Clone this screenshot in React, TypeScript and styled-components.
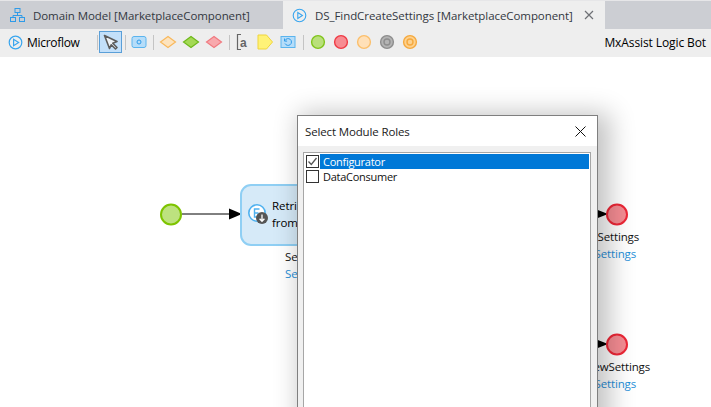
import React from "react";
import styled, { createGlobalStyle } from "styled-components";

const Global = createGlobalStyle`
  html, body { margin: 0; padding: 0; background: #fff; overflow: hidden; }
  #root { width: 711px; height: 407px; }
  * { box-sizing: border-box; }
`;

const Page = styled.div`
  width: 711px; height: 407px; display: flex; flex-direction: column; overflow: hidden;
  font-family: "Open Sans", "Noto Sans", sans-serif; font-size: 11.5px; letter-spacing: -0.07px; color: #000;
`;
const TabBar = styled.div`
  height: 29px; flex: none; display: flex; background: #ccced3; border-top: 1px solid #e6e6e8;
`;
const Tab = styled.div<{ $active?: boolean; $w: number }>`
  width: ${(p) => p.$w}px; display: flex; align-items: center; padding-left: ${(p) => (p.$active ? 9 : 10)}px; gap: 8px;
  background: ${(p) => (p.$active ? "#eeeeee" : "transparent")}; color: #33383f; white-space: nowrap;
`;
const TabClose = styled.svg`
  margin-left: 3px; flex: none;
`;
const Toolbar = styled.div`
  height: 28px; flex: none; background: #eeeeee; display: flex; align-items: center; padding: 0 5px 2px 8px;
`;
const ToolLabel = styled.span`
  font-size: 12px; letter-spacing: -0.3px; margin-left: 4px; width: 62px;
`;
const Sep = styled.i<{ $ml: number; $mr: number }>`
  width: 1px; height: 15px; background: #c4c4c4; flex: none; margin: 0 ${(p) => p.$mr}px 0 ${(p) => p.$ml}px;
`;
const PointerButton = styled.div`
  width: 23px; height: 22px; flex: none; background: #c3e0fa; border: 1px solid #5a9fd8; display: flex; align-items: center; justify-content: center; margin-right: 3px;
`;
const ToolIcon = styled.svg<{ $mr?: number }>`
  flex: none; width: 20px; height: 20px; margin-right: ${(p) => p.$mr ?? 3}px; display: block;
`;
const Bot = styled.span`
  margin-left: auto; font-size: 12px; letter-spacing: -0.1px;
`;
const Canvas = styled.div`
  position: relative; flex: 1; background: #fff;
`;
const Flow = styled.svg`
  position: absolute; left: 0; top: 0;
`;
const Activity = styled.div`
  position: absolute; left: 240px; top: 127px; width: 90px; height: 62px; background: #d6eaf8; border: 2px solid #8fcff4; border-radius: 11px;
  padding: 11px 0 0 30px; line-height: 17px; white-space: nowrap;
`;
const NodeIcon = styled.svg`
  position: absolute; left: 3px; top: 17px;
`;
const Caption = styled.div<{ $x: number; $y: number; $link?: boolean }>`
  position: absolute; top: ${(p) => p.$y - 57 - 8}px; right: ${(p) => 711 - p.$x}px; line-height: 16px; white-space: nowrap; letter-spacing: -0.15px;
  color: ${(p) => (p.$link ? "#1f8fd8" : "#111")};
`;
const LeftCaption = styled(Caption)`
  right: auto; left: ${(p) => p.$x}px;
`;
const Dialog = styled.div`
  position: absolute; left: 297px; top: 58px; width: 301px; height: 360px; background: #f0f0f0; border: 1px solid #7f7f7f;
  box-shadow: 7px 3px 24px 5px rgba(0,0,0,.24); display: flex; flex-direction: column;
`;
const DialogHead = styled.div`
  height: 30px; flex: none; background: #fff; display: flex; align-items: center; justify-content: space-between; padding: 0 11px 0 7px; color: #1a1a1a; letter-spacing: -0.14px;
`;
const ListBox = styled.div`
  margin: 6px 6px 0 5px; flex: 1; background: #fff; border: 1px solid #a6a6a6; padding: 1px 1px 0 1px;
`;
const Row = styled.div`
  display: flex; align-items: center; height: 15px; gap: 1px; padding-left: 1px;
`;
const Box = styled.span`
  width: 13px; height: 13px; flex: none; border: 1px solid #333; background: #fff; display: flex; align-items: center; justify-content: center;
`;
const RowText = styled.span<{ $sel?: boolean }>`
  flex: 1; height: 15px; line-height: 15px; padding-left: 3px; font-size: 11px; letter-spacing: -0.27px;
  background: ${(p) => (p.$sel ? "#0078d7" : "transparent")}; color: ${(p) => (p.$sel ? "#fff" : "#111")};
`;

const Diamond = ({ f, s }: { f: string; s: string }) => (
  <ToolIcon viewBox="0 0 20 20"><path d="M10 4.5 17.500 10 10 15.5 2.500 10Z" fill={f} stroke={s} strokeWidth="1.2" /></ToolIcon>
);
const Dot = ({ f, s, inner }: { f: string; s: string; inner?: boolean }) => (
  <ToolIcon viewBox="0 0 20 20">
    <circle cx="10" cy="10" r="6.4" fill={f} stroke={s} strokeWidth="1.4" />
    {inner && <circle cx="10" cy="10" r="3" fill="none" stroke={s} strokeWidth="1.4" />}
  </ToolIcon>
);

export default function App() {
  return (
    <Page>
      <Global />
      <TabBar>
        <Tab $w={283}>
          <svg width="15" height="16" viewBox="0 0 15 16" fill="none" stroke="#2f9be8" strokeWidth="1">
            <rect x="5" y="1.5" width="5" height="4" /><rect x=".5" y="10.5" width="5" height="4" /><rect x="9.5" y="10.5" width="5" height="4" />
            <path d="M7.5 5.5v3M3 10.5v-2h9v2" />
          </svg>
          Domain Model [MarketplaceComponent]
        </Tab>
        <Tab $active $w={322}>
          <svg width="15" height="15" viewBox="0 0 15 15" fill="none" stroke="#38a5ee" strokeWidth="1.1">
            <circle cx="7.5" cy="7.5" r="6.3" /><path d="M5.8 4.5v6l4.6-3Z" />
          </svg>
          DS_FindCreateSettings [MarketplaceComponent]
          <TabClose width="10" height="10" viewBox="0 0 10 10" stroke="#6e7075" strokeWidth="1.2"><path d="M1 1l8 8M9 1 1 9" /></TabClose>
        </Tab>
      </TabBar>
      <Toolbar>
        <svg width="15" height="15" viewBox="0 0 15 15" fill="none" stroke="#38a5ee" strokeWidth="1.2">
          <circle cx="7.5" cy="7.5" r="6.3" /><path d="M5.6 4.3v6.4l5-3.2Z" />
        </svg>
        <ToolLabel>Microflow</ToolLabel>
        <Sep $ml={8} $mr={1} />
        <PointerButton>
          <svg width="16" height="16" viewBox="0 0 16 16" fill="#eef2f6" stroke="#5c5c5c" strokeWidth="1.6" strokeLinejoin="round">
            <path d="M1.500 1.500 14 7.500 9.800 9.200 14 13.500 12.500 15 8.200 10.800 6.500 14.500Z" />
          </svg>
        </PointerButton>
        <Sep $ml={0} $mr={3} />
        <ToolIcon viewBox="0 0 20 20" $mr={4}>
          <rect x="3" y="4.500" width="14" height="11" rx="2" fill="#b6ddf9" stroke="#5ab4ee" /><circle cx="10" cy="10" r="2" fill="none" stroke="#2f9be8" />
        </ToolIcon>
        <Sep $ml={0} $mr={4} />
        <Diamond f="#fde3bd" s="#f8b85c" />
        <Diamond f="#a4d955" s="#6fb81b" />
        <Diamond f="#f8a9ad" s="#f07a80" />
        <Sep $ml={2} $mr={1} />
        <ToolIcon viewBox="0 0 20 20" $mr={4}>
          <path d="M10 2.500H6.500v15H10" fill="none" stroke="#666" strokeWidth="1.2" />
          <text x="9" y="14.500" fontSize="12" fontFamily="Liberation Sans, sans-serif" fontWeight="bold" fill="#666">a</text>
        </ToolIcon>
        <ToolIcon viewBox="0 0 20 20" $mr={3}>
          <path d="M3 3h8.500L17.500 10l-6 7H3Z" fill="#fff277" stroke="#f0d53c" />
        </ToolIcon>
        <ToolIcon viewBox="0 0 20 20" $mr={5}>
          <rect x="3" y="4.500" width="14" height="11" fill="#b6ddf9" stroke="#5ab4ee" />
          <path d="M7 8.500a3.400 3.400 0 1 1 0 3M6.500 6.500v2.600h2.600" fill="none" stroke="#2f9be8" />
        </ToolIcon>
        <Sep $ml={0} $mr={4} />
        <Dot f="#b9e07b" s="#80c41c" />
        <Dot f="#f78c92" s="#ef3b45" />
        <Dot f="#ffe0b8" s="#fbbf6c" />
        <Dot f="#b3b3b3" s="#8d8d8d" inner />
        <Dot f="#fdd18e" s="#f5a93e" inner />
        <Bot>MxAssist Logic Bot</Bot>
      </Toolbar>
      <Canvas>
        <Flow width="711" height="350" viewBox="0 0 711 350" fill="none">
          <line x1="182" y1="157" x2="232" y2="157" stroke="#000" />
          <path d="M229 151.500 242 157 229 162.500Z" fill="#000" />
          <circle cx="171" cy="157.500" r="10" fill="#bde27f" stroke="#7ec400" strokeWidth="2" />
          <path d="M594 151.500 608 157 594 162.500Z" fill="#000" />
          <circle cx="617" cy="157.500" r="10" fill="#f58c93" stroke="#ee2737" strokeWidth="2" />
          <path d="M594 281.500 608 287 594 292.500Z" fill="#000" />
          <circle cx="617" cy="287.500" r="10" fill="#f58c93" stroke="#ee2737" strokeWidth="2" />
        </Flow>
        <Activity>
          <NodeIcon width="26" height="26" viewBox="0 0 26 26" fill="none">
            <circle cx="12" cy="10" r="8.200" fill="#fff" stroke="#4fb1ef" strokeWidth="1.6" />
            <path d="M14.500 6H9.500v8h5M9.500 10h4" stroke="#4fb1ef" strokeWidth="1.4" />
            <circle cx="17" cy="15" r="6" fill="#555" />
            <path d="M17 11.500V18M14.600 15.800 17 18.300l2.400-2.500" stroke="#fff" strokeWidth="1.3" />
          </NodeIcon>
          Retrieve<br />from database
        </Activity>
        <LeftCaption $x={285} $y={257}>Settings</LeftCaption>
        <LeftCaption $x={285} $y={274} $link>Settings</LeftCaption>
        <Caption $x={639} $y={237}>$Settings</Caption>
        <Caption $x={636} $y={254} $link>Settings</Caption>
        <Caption $x={650} $y={367}>$NewSettings</Caption>
        <Caption $x={636} $y={384} $link>Settings</Caption>
        <Dialog>
          <DialogHead>
            Select Module Roles
            <svg width="11" height="11" viewBox="0 0 11 11" stroke="#111" strokeWidth="1"><path d="M.5.5l10 10M10.500.5l-10 10" /></svg>
          </DialogHead>
          <ListBox>
            <Row>
              <Box><svg width="11" height="11" viewBox="0 0 11 11" fill="none" stroke="#555" strokeWidth="1.3"><path d="M1.500 5.500 4.300 8.500 9.500 2" /></svg></Box>
              <RowText $sel>Configurator</RowText>
            </Row>
            <Row>
              <Box />
              <RowText>DataConsumer</RowText>
            </Row>
          </ListBox>
        </Dialog>
      </Canvas>
    </Page>
  );
}
